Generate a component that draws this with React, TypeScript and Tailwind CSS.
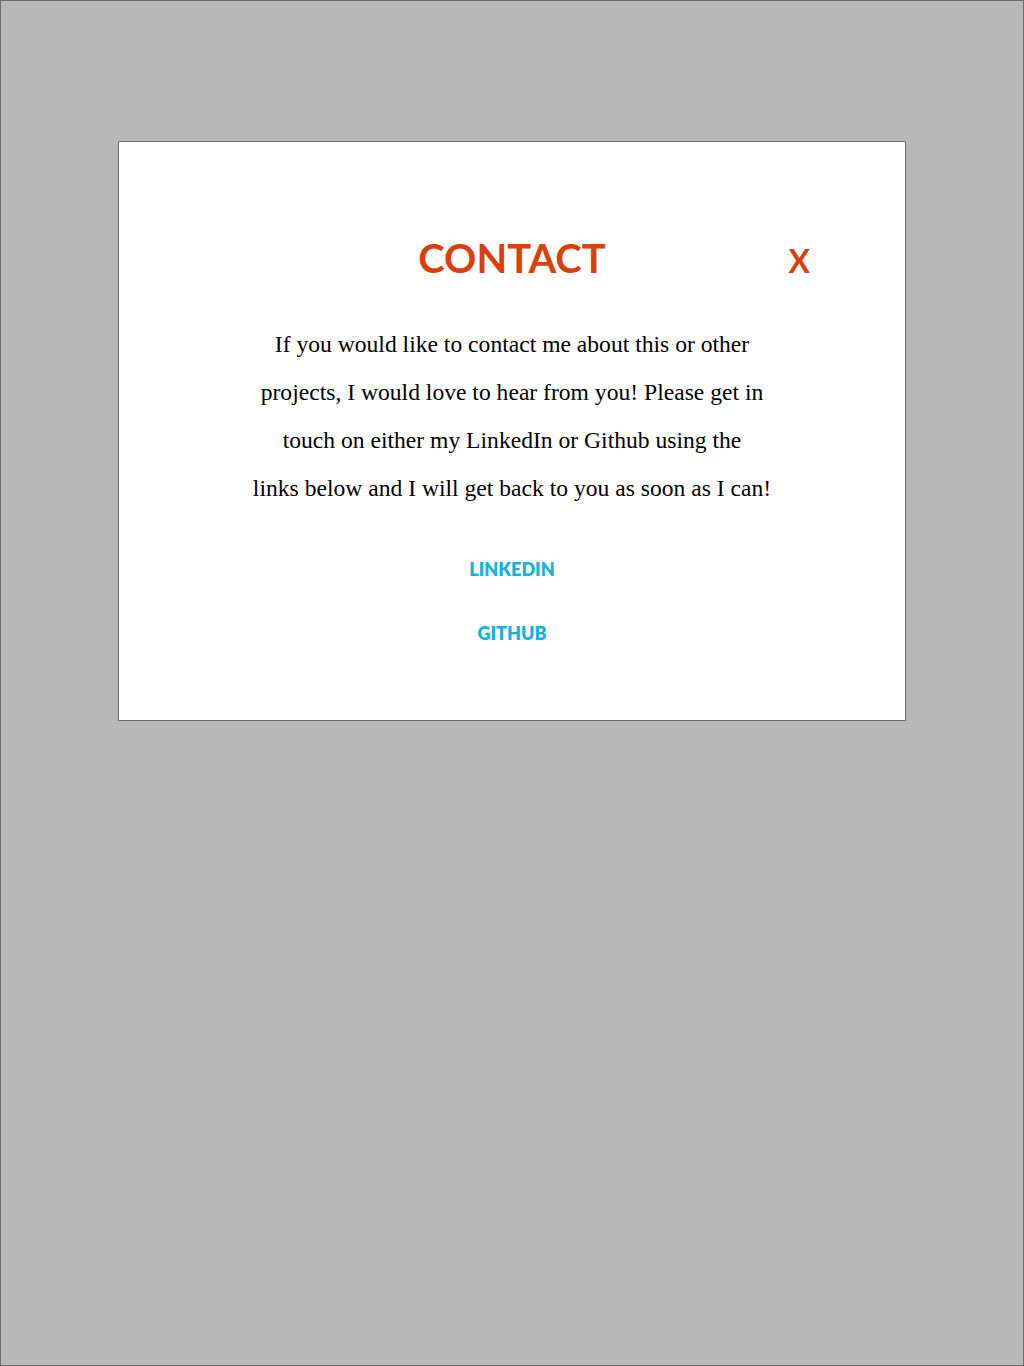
import React from "react";

const links = [
  { label: "LINKEDIN", href: "#" },
  { label: "GITHUB", href: "#" },
];

function ContactModal() {
  return (
    <div className="ml-[117px] mt-[140px] w-[788px] border border-[#6e6e6e] bg-white pt-[88px] pb-[75px]">
      {/* header: title centred, close on the right */}
      <div className="grid grid-cols-[1fr_auto_1fr] items-center">
        <div />
        <h1 className="font-['Lato','Liberation_Sans',sans-serif] text-[40px] font-bold leading-[56px] text-[#d9400b]">
          CONTACT
        </h1>
        <div className="flex justify-end pr-[95px] pt-[6px]">
          <button className="font-['Lato','Liberation_Sans',sans-serif] text-[32px] font-bold leading-none text-[#d9400b]">
            X
          </button>
        </div>
      </div>

      <p className="mt-[34px] text-center font-['Liberation_Serif',serif] text-[23.6px] leading-[48px] text-black">
        If you would like to contact me about this or other
        <br />
        projects, I would love to hear from you! Please get in
        <br />
        touch on either my LinkedIn or Github using the
        <br />
        links below and I will get back to you as soon as I can!
      </p>

      <div className="mt-[45px] flex flex-col items-center gap-[40px]">
        {links.map((link) => (
          <a
            key={link.label}
            href={link.href}
            className="font-['Lato','Liberation_Sans',sans-serif] text-[18px] font-extrabold leading-[24px] text-[#17b2d9]"
          >
            {link.label}
          </a>
        ))}
      </div>
    </div>
  );
}

export default function App() {
  return (
    <div className="h-[1366px] w-full overflow-hidden border border-[#6e6e6e] bg-[#b8b8b8]">
      <ContactModal />
    </div>
  );
}
